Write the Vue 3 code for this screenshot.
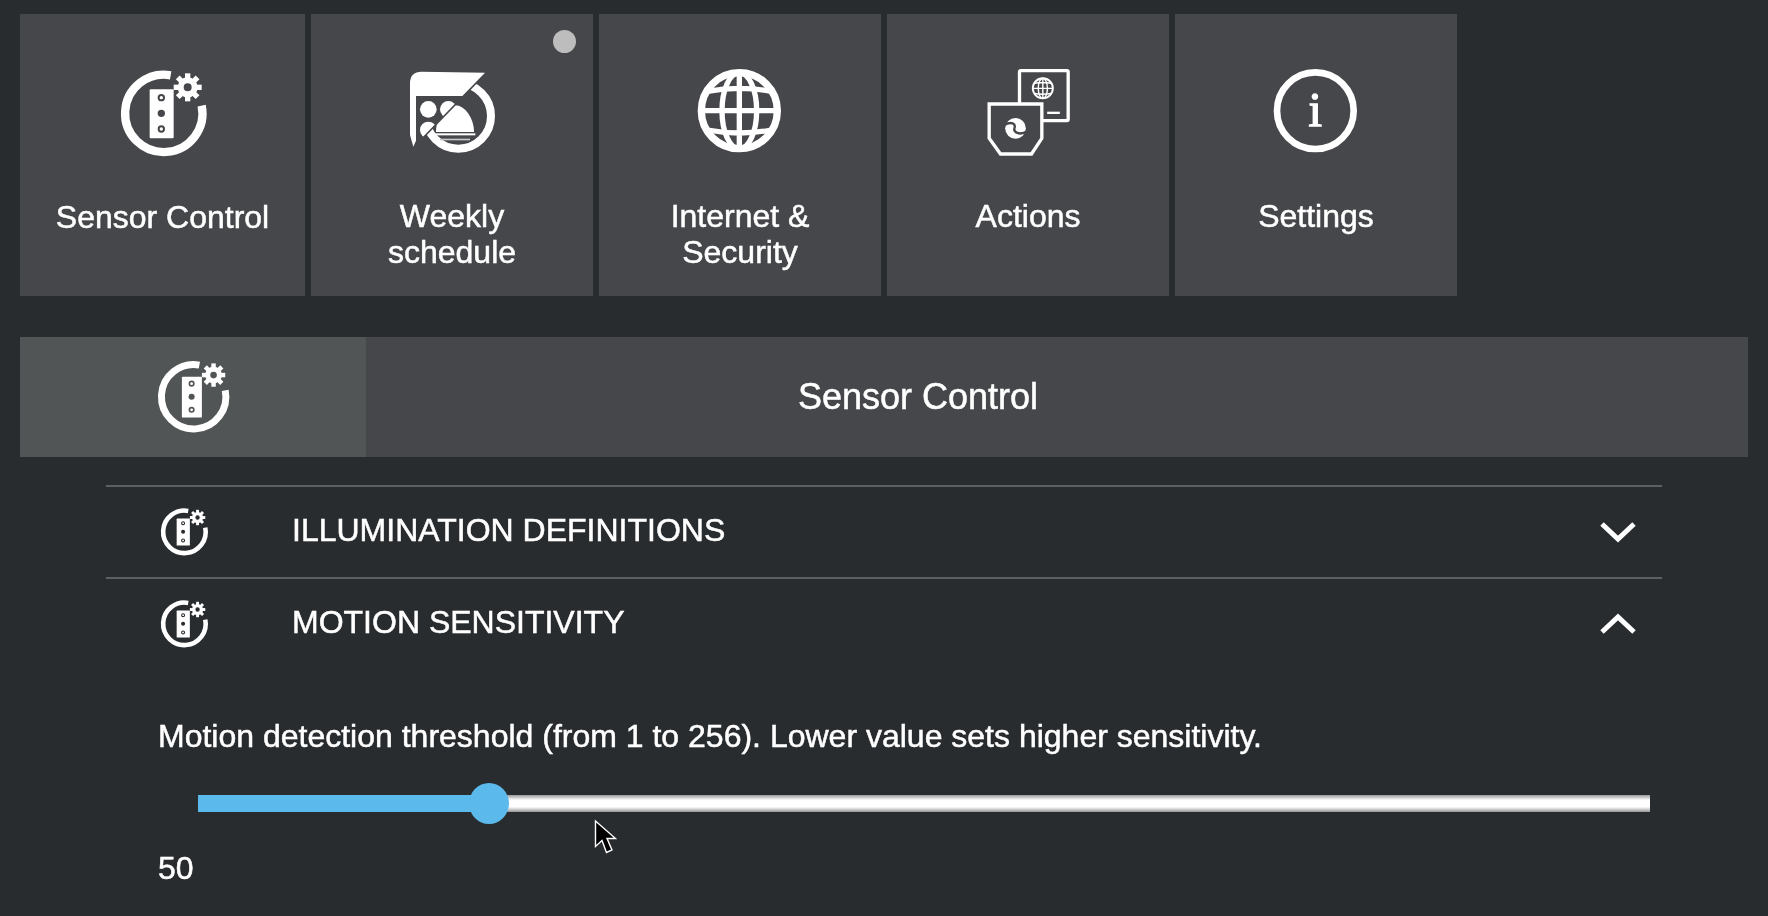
<script setup>
import { ref, computed } from 'vue'

const threshold = ref(50)
// share of the track left of the thumb, the thumb itself stays inside the track ends
const fillWidth = computed(() => {
    const ratio = (threshold.value - 1) / 255
    return `calc(20px + (100% - 40px) * ${ratio})`
})

const gearTeeth = [0, 45, 90, 135, 180, 225, 270, 315]
</script>

<template>
    <div class="page">
        <!-- shapes used more than once -->
        <svg class="defs" width="0" height="0" aria-hidden="true">
            <defs>
                <g id="sensor-icon">
                    <path d="M211 76A116 116 0 1 0 304 167" fill="none" stroke="#fff" stroke-width="25" />
                    <g transform="translate(262 112)">
                        <rect v-for="deg in gearTeeth" :key="deg" x="-8" y="-42" width="16" height="20" fill="#fff"
                            :transform="`rotate(${deg})`" />
                        <circle r="21" fill="none" stroke="#fff" stroke-width="18" />
                    </g>
                    <rect x="148" y="118" width="72" height="147" rx="3" fill="#fff" />
                    <circle cx="183" cy="143" r="8" fill="#fff" stroke="var(--hole)" stroke-width="6" />
                    <circle cx="183" cy="190" r="11" fill="var(--hole)" />
                    <circle cx="183" cy="237" r="8" fill="#fff" stroke="var(--hole)" stroke-width="6" />
                </g>
                <g id="globe-icon" fill="none" stroke="#fff">
                    <circle cx="178" cy="178" r="114" stroke-width="22" />
                    <ellipse cx="178" cy="178" rx="52" ry="114" stroke-width="16" />
                    <path d="M178 64V292M64 178H292M82 120Q178 102 274 120M82 236Q178 254 274 236" stroke-width="16" />
                </g>
                <clipPath id="cal-side">
                    <polygon points="0,0 345,0 285,68 70,290 0,360" />
                </clipPath>
                <clipPath id="bell-side">
                    <polygon points="331,28 400,28 400,400 4,400 8,361" />
                </clipPath>
            </defs>
        </svg>

        <section class="tiles">
            <div class="tile tile-first">
                <svg class="tile-icon" viewBox="8 0 360 360">
                    <use href="#sensor-icon" />
                </svg>
                <div class="tile-label">Sensor Control</div>
            </div>
            <div class="tile">
                <span class="badge"></span>
                <svg class="tile-icon" viewBox="6 0 360 360">
                    <path d="M60 100Q60 65 95 65L285 68 217 138H78V272L70 290 60 255Z" fill="#fff" />
                    <g clip-path="url(#cal-side)" fill="#fff">
                        <circle cx="115" cy="178" r="25" />
                        <circle cx="175" cy="178" r="25" />
                        <circle cx="115" cy="240" r="25" />
                    </g>
                    <g clip-path="url(#bell-side)">
                        <circle cx="205" cy="198" r="98" fill="none" stroke="#fff" stroke-width="24" />
                        <path d="M138 246C138 200 170 166 195 166 225 166 252 205 252 246Z" fill="#fff" />
                        <rect x="132" y="250" width="124" height="6" fill="#fff" />
                        <rect x="150" y="266" width="90" height="5" fill="#c8c8c8" />
                    </g>
                </svg>
                <div class="tile-label">Weekly<br />schedule</div>
            </div>
            <div class="tile">
                <svg class="tile-icon" viewBox="0 -4 360 360">
                    <use href="#globe-icon" />
                </svg>
                <div class="tile-label">Internet &amp;<br />Security</div>
            </div>
            <div class="tile">
                <svg class="tile-icon" viewBox="-7.5 0 360 360">
                    <rect x="147" y="62" width="146" height="150" rx="4" fill="none" stroke="#fff" stroke-width="10" />
                    <use href="#globe-icon" transform="translate(217 115) scale(.264) translate(-178 -178)" />
                    <rect x="230" y="185" width="38" height="7" fill="#fff" />
                    <path d="M56 162H214V265L183 312H90L56 265Z" fill="#46474b" stroke="#fff" stroke-width="10" />
                    <circle cx="135" cy="235" r="31" fill="#fff" />
                    <path d="M100 226C124 212 136 222 132 234 128 246 146 258 170 244" fill="none" stroke="#46474b"
                        stroke-width="7" />
                </svg>
                <div class="tile-label">Actions</div>
            </div>
            <div class="tile">
                <svg class="tile-icon" viewBox="0 -4 360 360">
                    <circle cx="178" cy="178" r="115" fill="none" stroke="#fff" stroke-width="20" />
                    <text x="178" y="225" class="info-glyph" text-anchor="middle">i</text>
                </svg>
                <div class="tile-label">Settings</div>
            </div>
        </section>

        <header class="panel-head">
            <div class="panel-head-icon">
                <svg viewBox="8 11 360 360">
                    <use href="#sensor-icon" />
                </svg>
            </div>
            <h1 class="panel-head-title">Sensor Control</h1>
        </header>

        <section class="accordion">
            <div class="acc-row">
                <svg class="acc-icon" viewBox="8 11 360 360">
                    <use href="#sensor-icon" />
                </svg>
                <span class="acc-title">ILLUMINATION DEFINITIONS</span>
                <svg class="acc-chevron" viewBox="0 0 36 22">
                    <path d="M2 3L18 18 34 3" />
                </svg>
            </div>
            <div class="acc-row">
                <svg class="acc-icon" viewBox="8 11 360 360">
                    <use href="#sensor-icon" />
                </svg>
                <span class="acc-title">MOTION SENSITIVITY</span>
                <svg class="acc-chevron" viewBox="0 0 36 22">
                    <path d="M2 19L18 4 34 19" />
                </svg>
            </div>
            <div class="acc-body">
                <p class="acc-text">Motion detection threshold (from 1 to 256). Lower value sets higher sensitivity.</p>
                <div class="slider-wrap">
                    <input v-model.number="threshold" class="slider" type="range" min="1" max="256"
                        :style="{ '--fill': fillWidth }" />
                    <!-- mouse pointer caught in the screenshot -->
                    <svg class="pointer" viewBox="0 0 23 35">
                        <path d="M1.5 1.5V27L8 21 12.5 33 18 30.5 13 19H21.5Z" fill="#000" stroke="#fff" stroke-width="1.4" />
                    </svg>
                </div>
                <div class="slider-value">{{ threshold }}</div>
            </div>
        </section>
    </div>
</template>

<style scoped>
.page {
    --hole: #46474b;
    box-sizing: border-box;
    min-height: 916px;
    padding: 14px 20px 0;
    background: #292c2f;
    color: #fff;
    font-family: "Liberation Sans", Arial, sans-serif;
    font-size: 32px;
    line-height: 36px;
    -webkit-text-stroke: 0.5px #fff;
    filter: blur(0.6px);
}

.defs {
    position: absolute;
}

.tiles {
    display: flex;
    gap: 6px;
}

.tile {
    position: relative;
    box-sizing: border-box;
    width: 282px;
    height: 282px;
    padding-top: 36px;
    background: #46474b;
    text-align: center;
}

.tile-first {
    width: 285px;
}

.tile-icon {
    display: block;
    width: 120px;
    height: 120px;
    margin: 0 auto;
}

.tile-label {
    margin-top: 28px;
}

.tile-first .tile-label {
    margin-top: 29px;
}

.badge {
    position: absolute;
    top: 16px;
    right: 17px;
    width: 23px;
    height: 23px;
    border-radius: 50%;
    background: #bdbdbd;
}

.info-glyph {
    font-family: "Liberation Serif", serif;
    font-size: 146px;
    fill: #fff;
    stroke: #fff;
    stroke-width: 4px;
}

.panel-head {
    --hole: #525556;
    display: flex;
    height: 120px;
    margin-top: 41px;
    background: #46474b;
}

.panel-head-icon {
    display: flex;
    flex: 0 0 346px;
    align-items: center;
    justify-content: center;
    background: #525556;
}

.panel-head-icon svg {
    width: 100px;
    height: 100px;
}

.panel-head-title {
    flex: 1;
    margin: 0;
    padding-right: 278px;
    font-size: 36px;
    font-weight: 400;
    line-height: 120px;
    text-align: center;
}

.accordion {
    --hole: #292c2f;
    margin: 28px 86px 0;
}

.acc-row {
    display: flex;
    box-sizing: border-box;
    align-items: center;
    height: 92px;
    padding: 0 26px 0 45px;
    border-top: 2px solid #5d5f61;
}

.acc-icon {
    flex: none;
    width: 66px;
    height: 66px;
}

.acc-title {
    flex: 1;
    margin: 0 0 4px 75px;
}

.acc-chevron {
    flex: none;
    width: 36px;
    height: 22px;
    fill: none;
    stroke: #fff;
    stroke-width: 5;
}

.acc-body {
    padding: 49px 12px 0 52px;
}

.acc-text {
    margin: 0;
}

.slider-wrap {
    position: relative;
    height: 41px;
    margin: 29px 0 26px 40px;
}

.slider {
    display: block;
    width: 100%;
    height: 41px;
    margin: 0;
    background: transparent;
    appearance: none;
    -webkit-appearance: none;
}

.slider::-webkit-slider-runnable-track {
    height: 17px;
    background:
        linear-gradient(#5bb9ec, #5bb9ec) 0 0 / var(--fill) 100% no-repeat,
        linear-gradient(#9a9a9a, #fff 30%, #fff 70%, #959595);
}

.slider::-webkit-slider-thumb {
    width: 40px;
    height: 41px;
    margin-top: -12px;
    border-radius: 50%;
    background: #5bb9ec;
    -webkit-appearance: none;
}

.pointer {
    position: absolute;
    top: 36px;
    left: 396px;
    width: 23px;
    height: 36px;
}
</style>

<style>
html,
body {
    background: #292c2f;
}
</style>
